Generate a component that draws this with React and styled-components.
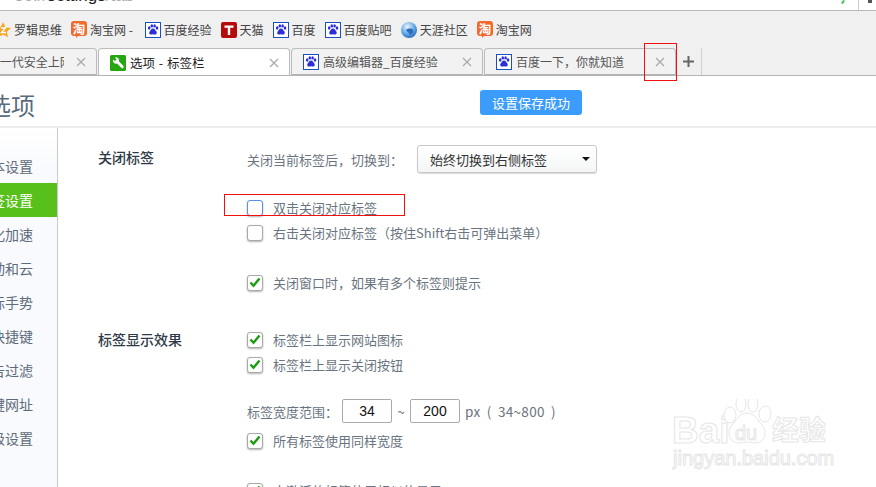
import React from "react";
import styled, { createGlobalStyle } from "styled-components";

const GlobalStyle = createGlobalStyle`
  html, body {
    margin: 0;
    padding: 0;
    height: 100%;
    overflow: hidden;
    background: #fff;
    font-family: "Noto Sans CJK SC", "Liberation Sans", sans-serif;
  }
`;

const Page = styled.div`
  position: relative;
  width: 876px;
  height: 487px;
  overflow: hidden;
  display: flex;
  flex-direction: column;
`;

const AddressBar = styled.div`
  height: 10px;
  flex: none;
  display: flex;
  overflow: hidden;
  background: #fff;
  border-bottom: 1px solid #b8b8b8;
`;

const AddressText = styled.div`
  margin: -13px 0 0 15px;
  font-family: "Liberation Sans", sans-serif;
  font-size: 17px;
  line-height: 17px;
  white-space: nowrap;
  color: #aaa;
  b {
    color: #222;
    font-weight: normal;
  }
`;

const AddressTools = styled.div`
  margin-left: auto;
  display: flex;
  align-items: flex-start;
  height: 10px;
`;

const Leaf = styled.div`
  width: 2px;
  height: 4px;
  margin-right: 14px;
  background: #4fc45a;
  transform: rotate(35deg);
`;

const ToolDivider = styled.div`
  width: 1px;
  height: 10px;
  background: #ccc;
  margin-right: 9px;
`;

const ToolDot = styled.div`
  width: 4px;
  height: 3px;
  margin-right: 4px;
  background: #555;
`;

const Bookmarks = styled.div`
  height: 37px;
  flex: none;
  display: flex;
  align-items: center;
  gap: 9px;
  margin-left: -5px;
  background: #f0f0f0;
  overflow: hidden;
`;

const Bookmark = styled.div`
  display: flex;
  align-items: center;
  gap: 3px;
  font-size: 12px;
  color: #444;
  white-space: pre;
`;

const TabStrip = styled.div`
  height: 27px;
  flex: none;
  display: flex;
  align-items: flex-end;
  gap: 1px;
  background: #f0f0f0;
  border-bottom: 1px solid #b4b4b4;
  box-sizing: content-box;
  overflow: hidden;
`;

const Tab = styled.div`
  width: 192px;
  height: ${(p) => (p.$active ? "28px" : "27px")};
  flex: none;
  box-sizing: border-box;
  display: flex;
  align-items: center;
  gap: 4px;
  margin-left: ${(p) => p.$offset || "0"};
  margin-bottom: ${(p) => (p.$active ? "-1px" : "0")};
  padding: 0 10px 0 11px;
  font-size: ${(p) => (p.$active ? "12.5px" : "12px")};
  word-spacing: ${(p) => (p.$active ? "1px" : "0")};
  color: ${(p) => (p.$active ? "#222" : "#555")};
  white-space: pre;
  background: ${(p) => (p.$active ? "#fff" : "#f2f2f2")};
  border: 1px solid #bcbcbc;
  border-bottom: ${(p) => (p.$active ? "none" : "1px solid #b4b4b4")};
  border-radius: 4px 4px 0 0;
`;

const TabTitle = styled.span`
  flex: 1;
  overflow: hidden;
  margin-right: ${(p) => p.$clip || "0"};
`;

const PlusButton = styled.div`
  width: 26px;
  height: 27px;
  flex: none;
  box-sizing: border-box;
  margin-left: -1px;
  display: flex;
  align-items: center;
  justify-content: center;
  border-right: 1px solid #cfcfcf;
`;

const PageHeader = styled.div`
  height: 52px;
  flex: none;
  display: flex;
  align-items: center;
  border-bottom: 2px solid #ececec;
  box-sizing: border-box;
`;

const PageTitle = styled.div`
  width: 35px;
  flex: none;
  display: flex;
  justify-content: flex-end;
  overflow: hidden;
  font-size: 24px;
  line-height: 30px;
  color: #5a6b80;
  white-space: nowrap;
  margin-top: 7px;
`;

const SavedNotice = styled.div`
  width: 102px;
  height: 25px;
  margin-left: 445px;
  margin-top: 2px;
  border-radius: 3px;
  background: #3b9cfb;
  color: #fff;
  font-size: 13px;
  line-height: 25px;
  text-align: center;
`;

const Body = styled.div`
  flex: 1;
  display: flex;
  min-height: 0;
`;

const Sidebar = styled.div`
  width: 58px;
  flex: none;
  box-sizing: border-box;
  padding-top: 21px;
  background: linear-gradient(#ffffff 0, #f8fafd 40px);
  border-right: 1px solid #c9c9c9;
`;

const SideItem = styled.div`
  height: 34px;
  display: flex;
  justify-content: flex-end;
  align-items: center;
  overflow: hidden;
  padding-right: 24px;
  font-size: 14px;
  white-space: nowrap;
  color: ${(p) => (p.$active ? "#fff" : "#5f6b7a")};
  background: ${(p) => (p.$active ? "#58c01a" : "transparent")};
`;

const Main = styled.div`
  flex: 1;
  padding: 17px 0 0 40px;
  overflow: hidden;
`;

const Section = styled.div`
  display: flex;
  margin-top: ${(p) => p.$gap || "0"};
`;

const Heading = styled.div`
  width: 149px;
  flex: none;
  font-size: 14px;
  font-weight: 500;
  line-height: 25px;
  color: #2f3a48;
  white-space: nowrap;
`;

const Options = styled.div`
  display: flex;
  flex-direction: column;
`;

const Row = styled.div`
  display: flex;
  align-items: center;
  height: ${(p) => p.$height || "25px"};
  margin-top: ${(p) => p.$gap || "0"};
  font-size: 13px;
  color: #6a7480;
  white-space: nowrap;
`;

const Check = styled.div`
  width: 16px;
  height: 16px;
  flex: none;
  box-sizing: border-box;
  margin-right: 10px;
  display: flex;
  align-items: center;
  justify-content: center;
  background: #fff;
  border: 1px solid ${(p) => (p.$focus ? "#5c8fee" : "#a9a9a9")};
  border-radius: 3px;
  box-shadow: 0 1px 2px rgba(0, 0, 0, 0.3);
`;

const Select = styled.div`
  width: 180px;
  height: 28px;
  box-sizing: border-box;
  margin-left: 14px;
  padding: 0 6px 0 12px;
  display: flex;
  align-items: center;
  justify-content: space-between;
  color: #333;
  background: linear-gradient(#ffffff, #f4f6f6);
  border: 1px solid #c8c8c8;
  border-radius: 3px;
  box-shadow: 0 1px 1px rgba(0, 0, 0, 0.15);
`;

const Caret = styled.div`
  width: 0;
  height: 0;
  border-left: 4px solid transparent;
  border-right: 4px solid transparent;
  border-top: 4px solid #111;
`;

const RangeLabel = styled.span`
  margin-right: 4px;
`;

const NumberBox = styled.div`
  width: 50px;
  height: 24px;
  box-sizing: border-box;
  border: 1px solid #aaa;
  border-radius: 2px;
  text-align: center;
  font-family: "Liberation Sans", sans-serif;
  font-size: 14px;
  line-height: 22px;
  color: #111;
`;

const Tilde = styled.span`
  width: 18px;
  text-align: center;
`;

const Hint = styled.span`
  margin-left: 5px;
  font-size: 13.5px;
  letter-spacing: 0.3px;
  word-spacing: 3px;
`;

const RedMark = styled.div`
  position: absolute;
  left: ${(p) => p.$left}px;
  top: ${(p) => p.$top}px;
  width: ${(p) => p.$width}px;
  height: ${(p) => p.$height}px;
  box-sizing: border-box;
  border: 1px solid #f01010;
  pointer-events: none;
`;

const Watermark = styled.div`
  position: absolute;
  left: 672px;
  top: 399px;
  width: 160px;
  height: 72px;
  pointer-events: none;
  font-family: "Liberation Sans", sans-serif;
  color: #fff;
  -webkit-text-stroke: 1px #e6e6e6;
`;

const MarkBai = styled.div`
  position: absolute;
  left: 0;
  top: 12px;
  font-size: 37px;
  line-height: 40px;
  font-weight: bold;
`;

const MarkPaw = styled.svg`
  position: absolute;
  left: 50px;
  top: 0;
`;

const MarkDu = styled.div`
  position: absolute;
  left: 63px;
  top: 22px;
  font-size: 20px;
  line-height: 24px;
`;

const MarkCn = styled.div`
  position: absolute;
  left: 100px;
  top: 14px;
  font-family: "Noto Sans CJK SC", sans-serif;
  font-size: 27px;
  line-height: 32px;
  font-weight: bold;
`;

const MarkUrl = styled.div`
  position: absolute;
  left: 1px;
  top: 48px;
  font-size: 20px;
  line-height: 22px;
  white-space: nowrap;
`;

const BaiduIcon = () => (
  <svg width="16" height="16" viewBox="0 0 16 16">
    <rect x="0.5" y="0.5" width="15" height="15" fill="#fff" stroke="#1a4fc0" />
    <g fill="#2a2fd8">
      <ellipse cx="4.2" cy="6" rx="1.3" ry="1.8" />
      <ellipse cx="6.8" cy="3.9" rx="1.3" ry="1.7" />
      <ellipse cx="9.6" cy="3.9" rx="1.3" ry="1.7" />
      <ellipse cx="12" cy="6" rx="1.3" ry="1.8" />
      <path d="M8 6.6c1.6 0 2 1.5 3 2.4 1.2 1.1 1 3.6-1 3.6-.9 0-1.3-.3-2-.3s-1.100.3-2 .3c-2 0-2.200-2.500-1-3.600 1-.9 1.400-2.400 3-2.400z" />
    </g>
  </svg>
);

const TaobaoIcon = () => (
  <svg width="16" height="17" viewBox="0 0 16 17">
    <path d="M3 0h10a3 3 0 0 1 3 3v9a3 3 0 0 1-3 3H7l-2 2v-2H3a3 3 0 0 1-3-3V3a3 3 0 0 1 3-3z" fill="#f2692c" />
    <text x="8" y="12.500" textAnchor="middle" fontSize="12.500" fontWeight="700" fill="#fff" fontFamily="Noto Sans CJK SC, sans-serif">淘</text>
  </svg>
);

const TmallIcon = () => (
  <svg width="16" height="16" viewBox="0 0 16 16">
    <rect width="16" height="16" rx="2" fill="#b50b0b" />
    <path d="M3.500 3.500h9v2.200H9.200V13H6.800V5.700H3.500z" fill="#fff" />
  </svg>
);

const GlobeIcon = () => (
  <svg width="16" height="16" viewBox="0 0 16 16">
    <defs>
      <radialGradient id="globe" cx="0.4" cy="0.3" r="0.8">
        <stop offset="0" stopColor="#e8f4ff" />
        <stop offset="0.6" stopColor="#5a9fe0" />
        <stop offset="1" stopColor="#1a5cb0" />
      </radialGradient>
    </defs>
    <circle cx="8" cy="8" r="8" fill="url(#globe)" />
    <path d="M5 8c2-2 6-2 7 0s-1 4-3 5c0-2-3-3-4-5z" fill="#2a6cc0" />
  </svg>
);

const StarIcon = () => (
  <svg width="16" height="16" viewBox="0 0 16 16">
    <path d="M8 0l2.400 5.200 5.600.7-4.100 3.800 1.100 5.600L8 12.500l-5 2.800 1.100-5.600L0 5.900l5.600-.7z" fill="#f5a623" />
    <path d="M6 6h4.500L6.500 10.500H11" stroke="#fff" strokeWidth="1.300" fill="none" />
  </svg>
);

const WrenchIcon = () => (
  <svg width="16" height="16" viewBox="0 0 16 16">
    <rect width="16" height="16" rx="1.500" fill="#27a614" />
    <path d="M5 2.500a3.200 3.200 0 0 1 4 4l4.300 4.300a1.400 1.400 0 0 1-2 2L7 8.500a3.200 3.200 0 0 1-4-4l2 1.500 1.500-1.500z" fill="#fff" />
  </svg>
);

const CloseIcon = ({ color = "#aaa" }) => (
  <svg width="10" height="10" viewBox="0 0 10 10">
    <path d="M1 1l8 8M9 1l-8 8" stroke={color} strokeWidth="1.300" fill="none" />
  </svg>
);

const PlusIcon = () => (
  <svg width="11" height="11" viewBox="0 0 11 11">
    <path d="M5.500 0v11M0 5.500h11" stroke="#666" strokeWidth="2" fill="none" />
  </svg>
);

const CheckMark = () => (
  <svg width="12" height="11" viewBox="0 0 12 11">
    <path d="M1.500 5.500l3 3.200L10.500 1.500" stroke="#1c9a12" strokeWidth="2.400" fill="none" />
  </svg>
);

const bookmarks = [
  { icon: <StarIcon />, label: "罗辑思维" },
  { icon: <TaobaoIcon />, label: "淘宝网 -\u00a0" },
  { icon: <BaiduIcon />, label: "百度经验" },
  { icon: <TmallIcon />, label: "天猫" },
  { icon: <BaiduIcon />, label: "百度" },
  { icon: <BaiduIcon />, label: "百度贴吧" },
  { icon: <GlobeIcon />, label: "天涯社区" },
  { icon: <TaobaoIcon />, label: "淘宝网" },
];

const tabs = [
  { title: "欢迎使用 新一代安全上网", offset: "-95px", clip: "8px", icon: <BaiduIcon /> },
  { title: "选项 - 标签栏", active: true, icon: <WrenchIcon /> },
  { title: "高级编辑器_百度经验", icon: <BaiduIcon /> },
  { title: "百度一下，你就知道", icon: <BaiduIcon /> },
];

const sideItems = [
  "基本设置",
  "标签设置",
  "优化加速",
  "自动和云",
  "鼠标手势",
  "快捷键",
  "广告过滤",
  "一键网址",
  "高级设置",
];

function Option({ checked, focus, gap, children }) {
  return (
    <Row $gap={gap}>
      <Check $focus={focus}>{checked && <CheckMark />}</Check>
      {children}
    </Row>
  );
}

export default function App() {
  return (
    <Page>
      <GlobalStyle />
      <AddressBar>
        <AddressText>
          se://<b>settings</b>/tab
        </AddressText>
        <AddressTools>
          <Leaf />
          <ToolDivider />
          <ToolDot />
        </AddressTools>
      </AddressBar>

      <Bookmarks>
        {bookmarks.map((b) => (
          <Bookmark key={b.label}>
            {b.icon}
            {b.label}
          </Bookmark>
        ))}
      </Bookmarks>

      <TabStrip>
        {tabs.map((t) => (
          <Tab key={t.title} $active={t.active} $offset={t.offset}>
            {t.icon}
            <TabTitle $clip={t.clip}>{t.title}</TabTitle>
            <CloseIcon />
          </Tab>
        ))}
        <PlusButton>
          <PlusIcon />
        </PlusButton>
      </TabStrip>

      <PageHeader>
        <PageTitle>选项</PageTitle>
        <SavedNotice>设置保存成功</SavedNotice>
      </PageHeader>

      <Body>
        <Sidebar>
          {sideItems.map((s, i) => (
            <SideItem key={s} $active={i === 1}>
              {s}
            </SideItem>
          ))}
        </Sidebar>
        <Main>
          <Section>
            <Heading>关闭标签</Heading>
            <Options>
              <Row $height="28px">
                关闭当前标签后，切换到：
                <Select>
                  始终切换到右侧标签
                  <Caret />
                </Select>
              </Row>
              <Option focus gap="22px">双击关闭对应标签</Option>
              <Option>右击关闭对应标签（按住Shift右击可弹出菜单）</Option>
              <Option checked gap="25px">关闭窗口时，如果有多个标签则提示</Option>
            </Options>
          </Section>
          <Section $gap="32px">
            <Heading>标签显示效果</Heading>
            <Options>
              <Option checked>标签栏上显示网站图标</Option>
              <Option checked>标签栏上显示关闭按钮</Option>
              <Row $height="24px" $gap="22px">
                <RangeLabel>标签宽度范围：</RangeLabel>
                <NumberBox>34</NumberBox>
                <Tilde>~</Tilde>
                <NumberBox>200</NumberBox>
                <Hint>px ( 34~800 )</Hint>
              </Row>
              <Option checked gap="5px">所有标签使用同样宽度</Option>
              <Option checked gap="25px">未激活的标签使用相似的显示</Option>
            </Options>
          </Section>
        </Main>
      </Body>

      <RedMark $left={224} $top={194} $width={181} $height={22} />
      <RedMark $left={644} $top={43} $width={33} $height={38} />

      <Watermark>
        <MarkBai>Bai</MarkBai>
        <MarkPaw width="50" height="50" viewBox="0 0 50 50">
          <g fill="#fff" stroke="#e6e6e6" strokeWidth="1">
            <ellipse cx="8" cy="16" rx="6" ry="8" />
            <ellipse cx="19" cy="5" rx="5" ry="8" />
            <ellipse cx="31" cy="5" rx="5" ry="8" />
            <ellipse cx="43" cy="15" rx="6" ry="8" />
            <path d="M25 14c8 0 11 8 15 12 6 6 3 18-7 18-3 0-5-1-8-1s-5 1-8 1C7 44 4 32 10 26c4-4 7-12 15-12z" />
          </g>
        </MarkPaw>
        <MarkDu>du</MarkDu>
        <MarkCn>经验</MarkCn>
        <MarkUrl>jingyan.baidu.com</MarkUrl>
      </Watermark>
    </Page>
  );
}
